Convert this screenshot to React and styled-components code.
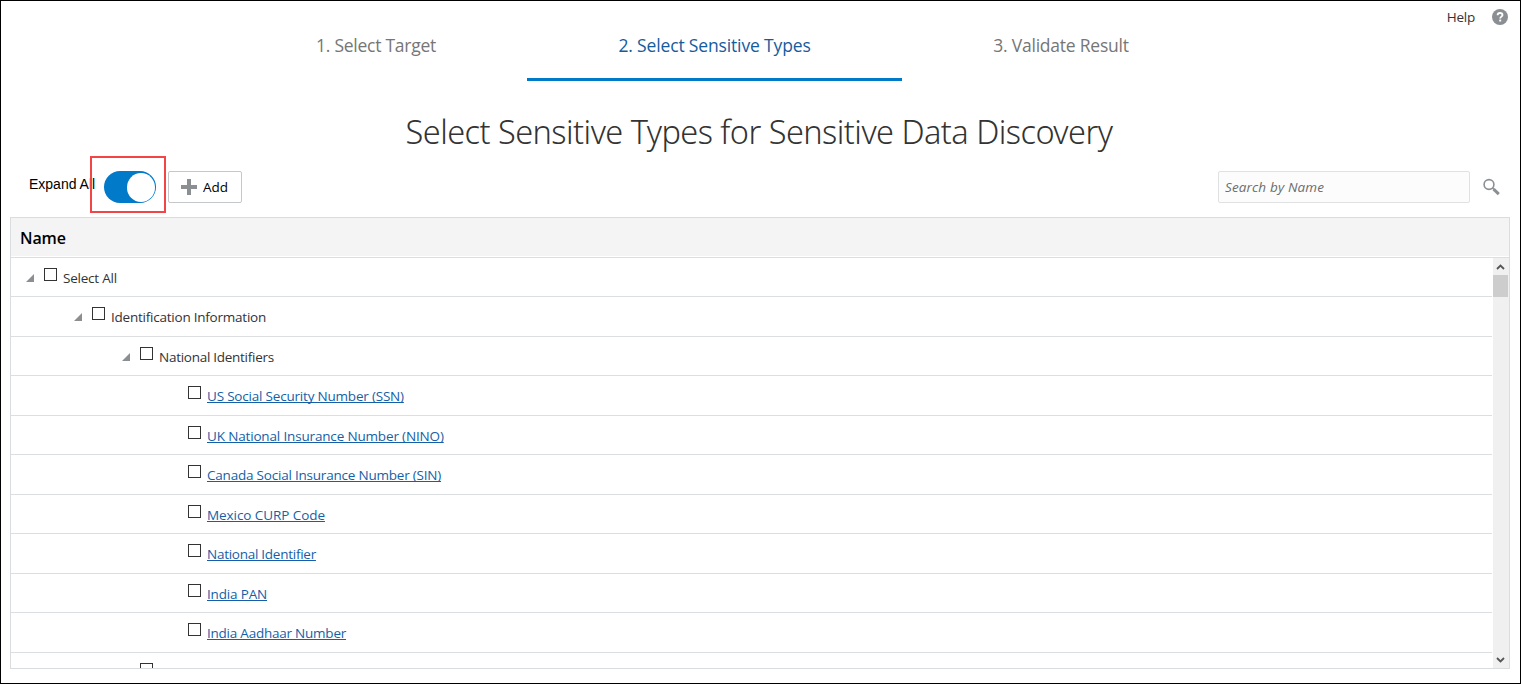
import React from 'react';
import styled, { createGlobalStyle } from 'styled-components';

const GlobalStyle = createGlobalStyle`
  *, *::before, *::after { box-sizing: border-box; }
  body {
    margin: 0;
    background: #fff;
    color: #333;
    font-family: "Open Sans", "Noto Sans", sans-serif;
    font-size: 13.5px;
  }
`;

const Page = styled.main`
  display: flex;
  flex-direction: column;
  width: 1521px;
  height: 684px;
  border: 1px solid #000;
  overflow: hidden;
`;

const TopBar = styled.header`
  display: flex;
  align-items: flex-start;
  height: 80px;
  padding: 0 12px 0 224px;
`;

const Steps = styled.nav`
  display: flex;
  padding-top: 12px;
`;

const Step = styled.div`
  width: ${(p) => p.$width}px;
  height: 68px;
  line-height: 65px;
  border-bottom: 3px solid ${(p) => (p.$active ? '#0079c8' : 'transparent')};
  color: ${(p) => (p.$active ? '#145c9e' : '#767676')};
  font-size: 17.5px;
  letter-spacing: ${(p) => p.$tracking}px;
  text-align: center;
  white-space: nowrap;
`;

const Help = styled.div`
  display: flex;
  align-items: center;
  gap: 17px;
  height: 16px;
  margin: 8px 0 0 auto;
  letter-spacing: -0.25px;
`;

const Title = styled.h1`
  height: 39px;
  margin: 31px 3px 0 0;
  line-height: 40px;
  font-family: "Noto Sans", "Open Sans", sans-serif;
  font-size: 32.5px;
  font-weight: 300;
  letter-spacing: -0.54px;
  text-align: center;
  white-space: nowrap;
`;

const Toolbar = styled.div`
  display: flex;
  align-items: center;
  height: 32px;
  margin: 20px 0 14px;
  padding: 0 19px 0 28px;
`;

const ToggleLabel = styled.span`
  width: 75px;
  padding-bottom: 6px;
  color: #000;
  font: 14px/16px "Liberation Sans", Arial, sans-serif;
  white-space: nowrap;
`;

const Toggle = styled.div`
  position: relative;
  display: flex;
  justify-content: flex-end;
  width: 52px;
  height: 32px;
  padding: 1.5px 1px;
  border-radius: 16px;
  background: #007ac9;
`;

const Knob = styled.span`
  width: 28.5px;
  height: 29px;
  border-radius: 50%;
  background: #fff;
`;

const Highlight = styled.span`
  position: absolute;
  top: -15px;
  left: -14px;
  width: 76px;
  height: 57px;
  border: 2px solid #f24545;
`;

const AddButton = styled.button`
  display: flex;
  align-items: center;
  gap: 6px;
  width: 74px;
  height: 32px;
  margin-left: 12px;
  padding: 0 0 0 12px;
  border: 1px solid #c4c8cb;
  border-radius: 2px;
  background: #fff;
  color: #000;
  font: inherit;
`;

const SearchBox = styled.input`
  width: 252px;
  height: 32px;
  margin-left: auto;
  padding: 0 6px;
  border: 1px solid #dfe1e3;
  border-radius: 2px;
  background: #fcfcfc;
  font: inherit;
  letter-spacing: 0.15px;
  &::placeholder {
    color: #6d6d6d;
    opacity: 1;
    font-style: italic;
  }
`;

const SearchIcon = styled.svg`
  margin-left: 12px;
`;

const Table = styled.section`
  display: flex;
  flex-direction: column;
  width: 1500px;
  height: 452px;
  margin-left: 9px;
  border: 1px solid #d9dde0;
`;

const TableHead = styled.div`
  height: 40px;
  padding: 1px 9px 0;
  border-bottom: 1px solid #dcdfe1;
  background: #f4f4f4;
  box-shadow: inset 0 -1px #fff;
  color: #000;
  font-size: 16px;
  font-weight: 600;
  letter-spacing: -0.15px;
  line-height: 38px;
`;

const TableBody = styled.div`
  display: flex;
  flex: 1;
  min-height: 0;
`;

const Rows = styled.div`
  width: 1481px;
  overflow: hidden;
`;

const Row = styled.div`
  display: flex;
  height: ${(p) => (p.$tall ? 40 : 39)}px;
  padding-left: ${(p) => 15 + p.$level * 48}px;
  border-bottom: 1px solid #dcdfe1;
`;

const Disclosure = styled.svg`
  flex: none;
  width: 8px;
  height: 8px;
  margin: 16px 10px 0 0;
`;

const DisclosureSpace = styled.span`
  width: 18px;
`;

const Checkbox = styled.span`
  flex: none;
  width: 13px;
  height: 13px;
  margin: 10px 6px 0 0;
  border: 1px solid #333;
  background: #fff;
`;

const Label = styled.span`
  line-height: 41px;
  letter-spacing: ${(p) => p.$tracking}px;
  white-space: nowrap;
`;

const LinkLabel = styled(Label).attrs({ as: 'a' })`
  color: #145fa8;
  text-decoration: underline;
  text-decoration-thickness: 1px;
  text-decoration-skip-ink: none;
  text-underline-offset: 1px;
`;

const ScrollBar = styled.div`
  display: flex;
  flex-direction: column;
  justify-content: space-between;
  width: 16px;
  margin-left: 1px;
  background: #f0f0f0;
`;

const Thumb = styled.div`
  width: 15px;
  height: 22px;
  margin-bottom: auto;
  background: #cdcdcd;
`;

const Arrow = styled.svg`
  flex: none;
  width: 15px;
  height: 17px;
`;

const rows = [
  { text: 'Select All', level: 0, open: true, tracking: -0.22 },
  { text: 'Identification Information', level: 1, open: true, tracking: -0.23 },
  { text: 'National Identifiers', level: 2, open: true, tracking: -0.27 },
  { text: 'US Social Security Number (SSN)', level: 3, tracking: -0.2 },
  { text: 'UK National Insurance Number (NINO)', level: 3, tracking: -0.16 },
  { text: 'Canada Social Insurance Number (SIN)', level: 3, tracking: -0.21 },
  { text: 'Mexico CURP Code', level: 3, tracking: -0.07 },
  { text: 'National Identifier', level: 3, tracking: -0.26 },
  { text: 'India PAN', level: 3, tracking: -0.17 },
  { text: 'India Aadhaar Number', level: 3, tracking: -0.23 },
  { text: '', level: 2 },
];

function TreeRow({ row, tall }) {
  const Text = row.level === 3 ? LinkLabel : Label;
  return (
    <Row $level={row.level} $tall={tall}>
      {row.open ? (
        <Disclosure viewBox="0 0 8 8"><path d="M8 0v8H0z" fill="#8b8f92" /></Disclosure>
      ) : (
        <DisclosureSpace />
      )}
      <Checkbox />
      <Text $tracking={row.tracking}>{row.text}</Text>
    </Row>
  );
}

export default function App() {
  return (
    <Page>
      <GlobalStyle />
      <TopBar>
        <Steps>
          <Step $width={302} $tracking={-0.26}>1. Select Target</Step>
          <Step $width={375} $tracking={-0.15} $active>2. Select Sensitive Types</Step>
          <Step $width={318} $tracking={-0.23}>3. Validate Result</Step>
        </Steps>
        <Help>
          Help
          <svg width="16" height="16" viewBox="0 0 16 16">
            <circle cx="8" cy="8" r="8" fill="#8b8f93" />
            <path d="M5.6 6.3C5.6 4.8 6.6 4 8 4s2.5.8 2.5 2.1c0 1.5-2.3 1.6-2.3 3.3" fill="none" stroke="#fff" strokeWidth="1.8" />
            <path d="M7.2 10.6h2v1.9h-2z" fill="#fff" />
          </svg>
        </Help>
      </TopBar>
      <Title>Select Sensitive Types for Sensitive Data Discovery</Title>
      <Toolbar>
        <ToggleLabel>Expand All</ToggleLabel>
        <Toggle role="switch" aria-checked="true">
          <Knob />
          <Highlight />
        </Toggle>
        <AddButton>
          <svg width="16" height="16" viewBox="0 0 16 16">
            <path d="M6 0h4v6h6v4h-6v6H6v-6H0V6h6z" fill="#8b8f92" />
          </svg>
          Add
        </AddButton>
        <SearchBox placeholder="Search by Name" />
        <SearchIcon width="19" height="18" viewBox="0 0 19 18" fill="none" stroke="#8b8f93">
          <circle cx="7" cy="6.5" r="4.9" strokeWidth="1.6" />
          <path d="M10.5 10l2 2" strokeWidth="1.5" />
          <path d="M11.6 11.2l5.2 5" strokeWidth="3" />
        </SearchIcon>
      </Toolbar>
      <Table>
        <TableHead>Name</TableHead>
        <TableBody>
          <Rows>
            {rows.map((row, i) => <TreeRow key={i} row={row} tall={i % 2 === 1} />)}
          </Rows>
          <ScrollBar>
            <Arrow viewBox="0 0 15 17"><path d="M4 11l3.5-3.5L11 11" fill="none" stroke="#555" strokeWidth="1.8" /></Arrow>
            <Thumb />
            <Arrow viewBox="0 0 15 17"><path d="M4 7l3.5 3.5L11 7" fill="none" stroke="#555" strokeWidth="1.8" /></Arrow>
          </ScrollBar>
        </TableBody>
      </Table>
    </Page>
  );
}
